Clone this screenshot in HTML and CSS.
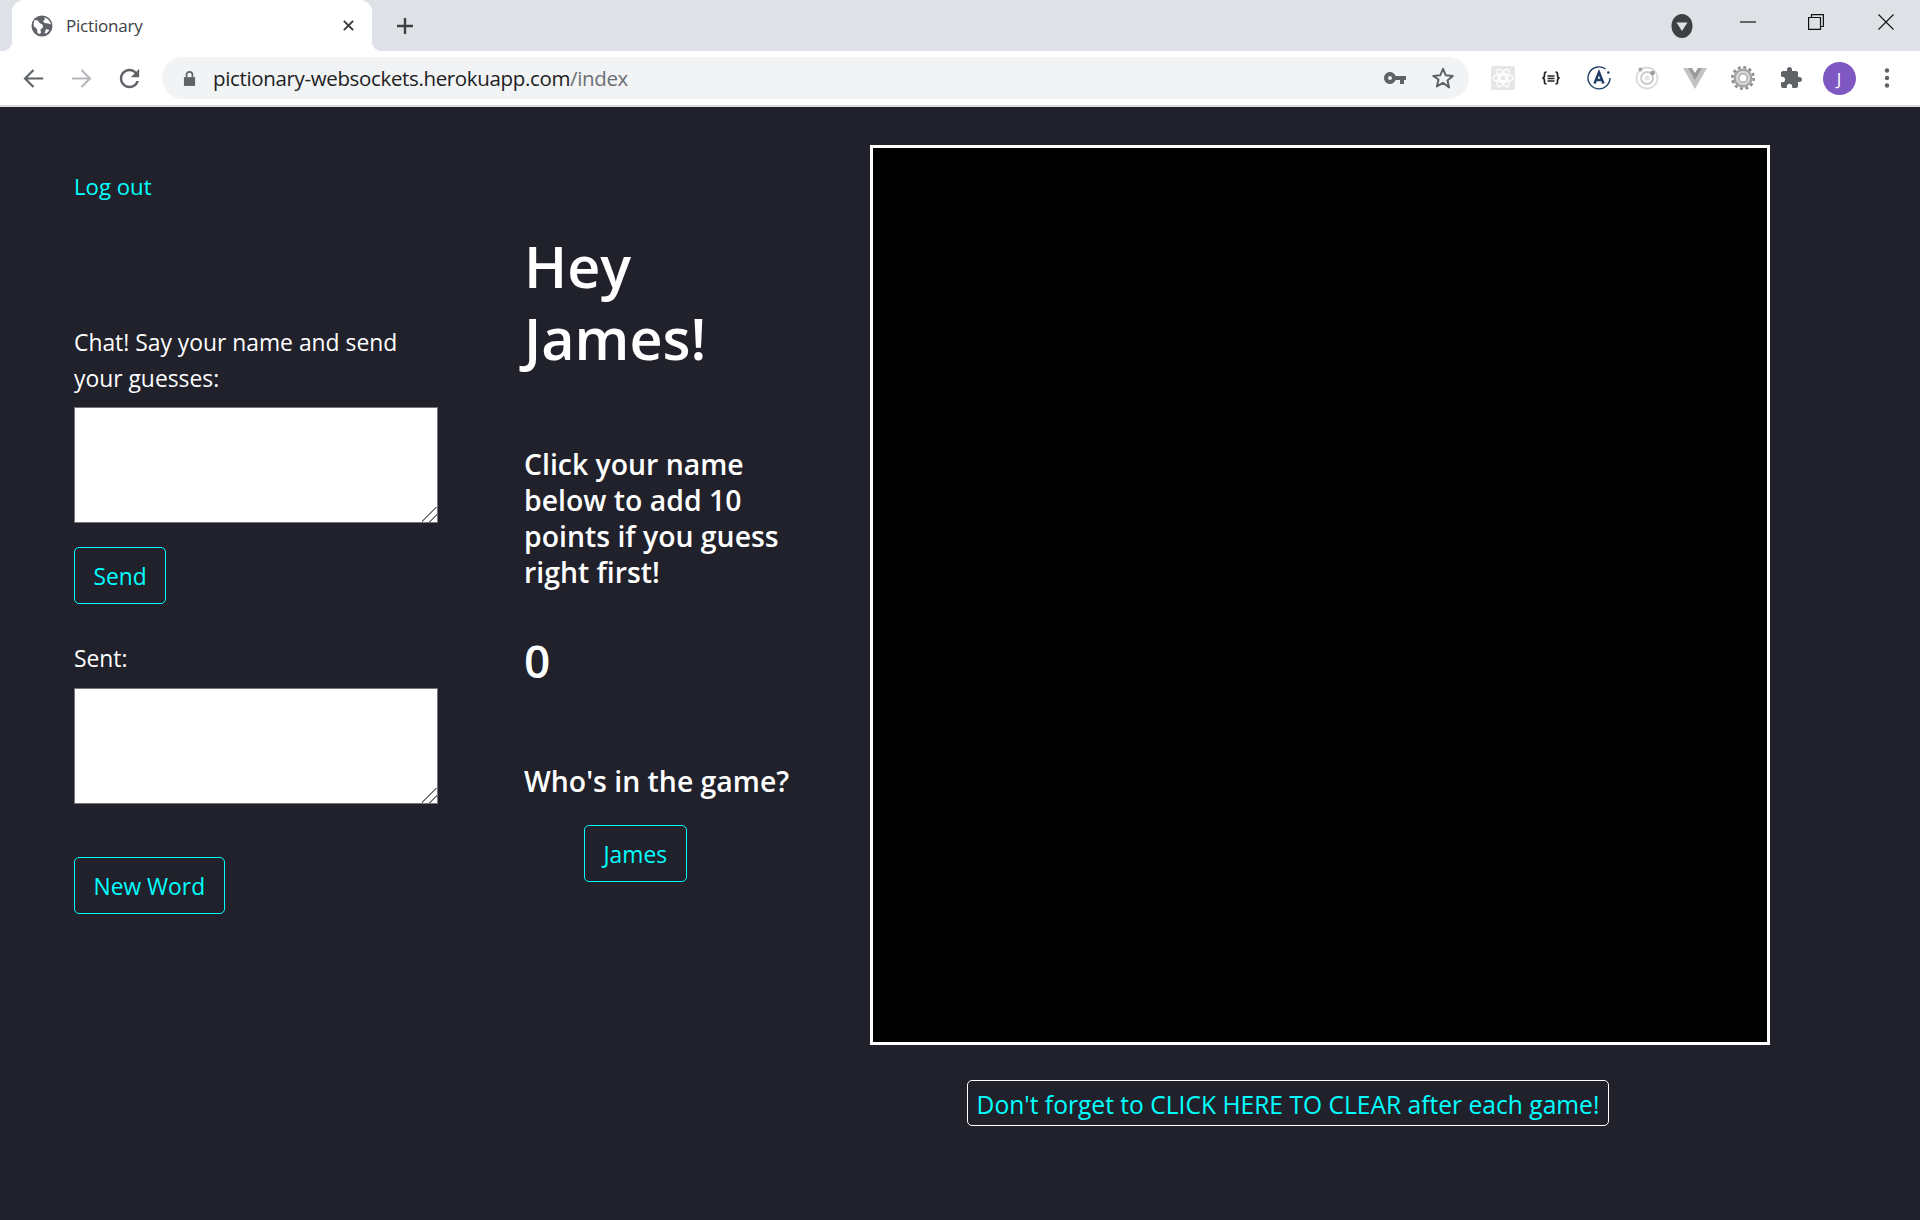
FILE: index.html
```html
<!DOCTYPE html>
<html lang="en">
<head>
<meta charset="utf-8">
<title>Pictionary</title>
<link rel="stylesheet" href="styles.css">
</head>
<body>
<header class="chrome">
  <div class="tabstrip">
    <div class="tab">
      <svg class="favicon" viewBox="0 0 22 22"><circle cx="11" cy="11" r="10.5" fill="#5f6368"/><path d="M3.500 5l3.500.500 1.500 2.500 3 1.500.5 3-2.500 2 .5 3.500-1.500 1-2-1-.5-4-3-2.500-.5-2.500zM13 2.500l1 2-2 1.500 1.500 2 4 .5 2.500 1c-.5-3-3-6-7-7zM15 14l3.500 1-2.500 3-2.500.500z" fill="#fff"/></svg>
      <span class="tab-title">Pictionary</span>
      <svg class="tab-close" viewBox="0 0 14 14"><path d="M2 2l10 10M12 2L2 12" stroke="#3c4043" stroke-width="2.200" fill="none"/></svg>
    </div>
    <svg class="new-tab" viewBox="0 0 18 18"><path d="M9 1v16M1 9h16" stroke="#3c4043" stroke-width="2.400" fill="none"/></svg>
    <div class="strip-right">
      <svg class="media" viewBox="0 0 22 24"><ellipse cx="11" cy="12" rx="10.500" ry="12" fill="#3c4043"/><path d="M5.500 8.500h11L11 17z" fill="#dee1e6"/></svg>
      <svg class="win win-min" viewBox="0 0 16 16"><path d="M0 8h16" stroke="#111" stroke-width="1.200"/></svg>
      <svg class="win win-max" viewBox="0 0 16 16"><path d="M.6 3.500h11.900v11.900H.6zM3.500 3.500V.6h11.900v11.900h-2.900" stroke="#111" stroke-width="1.200" fill="none"/></svg>
      <svg class="win win-close" viewBox="0 0 16 16"><path d="M.5.500l15 15M15.500.500l-15 15" stroke="#111" stroke-width="1.100" fill="none"/></svg>
    </div>
  </div>
  <div class="toolbar">
    <div class="tool nav"><svg viewBox="0 0 24 24"><path d="M20 12H5M12 5l-7 7 7 7" stroke="#5f6368" stroke-width="1.800" fill="none"/></svg></div>
    <div class="tool nav"><svg viewBox="0 0 24 24"><path d="M4 12h15M12 5l7 7-7 7" stroke="#b4b7bb" stroke-width="1.800" fill="none"/></svg></div>
    <div class="tool nav"><svg viewBox="0 0 24 24"><path d="M17.650 6.350C16.200 4.900 14.210 4 12 4c-4.420 0-7.990 3.580-7.990 8s3.570 8 7.990 8c3.730 0 6.840-2.550 7.730-6h-2.080c-.820 2.330-3.040 4-5.650 4-3.310 0-6-2.690-6-6s2.690-6 6-6c1.660 0 3.140.690 4.220 1.780L13 11h7V4l-2.350 2.350z" fill="#5f6368"/></svg></div>
    <div class="omnibox">
      <svg class="lock" viewBox="0 0 14 18"><path d="M1 7.500h12V17H1z" fill="#5f6368"/><path d="M3.800 8V5a3.200 3.200 0 0 1 6.400 0v3" stroke="#5f6368" stroke-width="1.800" fill="none"/></svg>
      <span class="url">pictionary-websockets.herokuapp.com<span class="url-path">/index</span></span>
      <svg class="omni-key" viewBox="1 6 22 12"><path d="M12.650 10C11.830 7.670 9.610 6 7 6c-3.310 0-6 2.690-6 6s2.690 6 6 6c2.610 0 4.830-1.670 5.650-4H17v4h4v-4h2v-4H12.650zM7 14c-1.100 0-2-.900-2-2s.900-2 2-2 2 .900 2 2-.900 2-2 2z" fill="#5f6368"/></svg>
      <svg class="omni-star" viewBox="0 0 24 24"><path d="M12 2.800l2.800 6.500 7 .6-5.300 4.600 1.600 6.900L12 16.800l-6.100 3.600 1.600-6.900L2.200 9.900l7-.6z" stroke="#5f6368" stroke-width="2" fill="none" stroke-linejoin="round"/></svg>
    </div>
    <div class="ext-row">
      <div class="tool"><svg viewBox="0 0 24 24"><rect width="24" height="24" rx="1.500" fill="#e6e6e6"/><g fill="none" stroke="#fff" stroke-width="1.300"><circle cx="12" cy="12" r="3"/><ellipse cx="12" cy="12" rx="10" ry="4"/><ellipse cx="12" cy="12" rx="10" ry="4" transform="rotate(60 12 12)"/><ellipse cx="12" cy="12" rx="10" ry="4" transform="rotate(120 12 12)"/></g></svg></div>
      <div class="tool"><svg viewBox="0 0 24 24"><path d="M7.500 6c-2.500 0-2 1.700-2 3.200 0 1.600-.6 2.800-2.200 2.800 1.600 0 2.200 1.200 2.200 2.800 0 1.500-.5 3.200 2 3.200M16.500 6c2.500 0 2 1.700 2 3.200 0 1.600.6 2.800 2.200 2.800-1.600 0-2.200 1.200-2.200 2.800 0 1.500.5 3.200-2 3.200" stroke="#202124" stroke-width="1.700" fill="none"/><path d="M8.500 10h7M8.500 12.500h7M8.500 15h7" stroke="#202124" stroke-width="1.400"/></svg></div>
      <div class="tool"><svg viewBox="0 0 24 24"><path d="M18.500 3A11 11 0 1 0 23 12" stroke="#1d3e66" stroke-width="1.400" fill="none"/><circle cx="21.300" cy="6.500" r="1.200" fill="#1d3e66"/><path d="M7.500 17.500L12 6.300l4.500 11.200M9.200 14h5.600" stroke="#1d3e66" stroke-width="2.400" fill="none"/></svg></div>
      <div class="tool"><svg viewBox="0 0 24 24"><circle cx="12" cy="12" r="10.500" stroke="#dcdcdc" stroke-width="1.800" fill="none"/><circle cx="12" cy="12" r="6" stroke="#c9c9c9" stroke-width="1.800" fill="none"/><circle cx="12" cy="12" r="2.500" fill="#e3e3e3"/><circle cx="5.500" cy="3.500" r="2" fill="#a5a5a5"/><circle cx="17.500" cy="7" r="2.200" fill="#999"/></svg></div>
      <div class="tool"><svg viewBox="0 0 24 24"><path d="M0 2h7l5 8 5-8h7L12 23z" fill="#c3c3c3"/><path d="M5 2h4l3 5 3-5h4l-7 12z" fill="#9b9b9b"/></svg></div>
      <div class="tool"><svg viewBox="0 0 24 24"><circle cx="12" cy="12" r="9.500" fill="#a3a3a3"/><circle cx="12" cy="12" r="10.700" fill="none" stroke="#8d8d8d" stroke-width="2.600" stroke-dasharray="3 2.600"/><circle cx="12" cy="12" r="6" fill="none" stroke="#d6d6d6" stroke-width="2.500"/><circle cx="12" cy="12" r="3.500" fill="#fff"/></svg></div>
      <div class="tool"><svg viewBox="0 0 24 24"><path d="M20.500 11H19V7c0-1.100-.900-2-2-2h-4V3.500C13 2.120 11.880 1 10.500 1S8 2.120 8 3.500V5H4c-1.100 0-1.990.900-1.990 2v3.800H3.500c1.490 0 2.700 1.210 2.700 2.700s-1.210 2.700-2.700 2.700H2V20c0 1.100.900 2 2 2h3.800v-1.500c0-1.490 1.210-2.700 2.700-2.700 1.490 0 2.700 1.210 2.700 2.700V22H17c1.100 0 2-.900 2-2v-4h1.500c1.380 0 2.500-1.120 2.500-2.500S21.880 11 20.500 11z" fill="#5f6368"/></svg></div>
      <div class="tool"><span class="avatar">J</span></div>
      <div class="tool"><svg viewBox="0 0 24 24"><circle cx="12" cy="4.500" r="2.200" fill="#5f6368"/><circle cx="12" cy="12" r="2.200" fill="#5f6368"/><circle cx="12" cy="19.500" r="2.200" fill="#5f6368"/></svg></div>
    </div>
  </div>
</header>
<main class="page">
  <section class="col-chat">
    <a class="logout" href="#">Log out</a>
    <p class="chat-label">Chat! Say your name and send your guesses:</p>
    <textarea class="chat-box"></textarea>
    <button class="btn send-btn">Send</button>
    <p class="sent-label">Sent:</p>
    <textarea class="chat-box"></textarea>
    <button class="btn word-btn">New Word</button>
  </section>
  <section class="col-score">
    <h1 class="greeting">Hey<br>James!</h1>
    <h3 class="hint">Click your name<br>below to add 10<br>points if you guess<br>right first!</h3>
    <div class="score">0</div>
    <h3 class="players-title">Who's in the game?</h3>
    <button class="btn player-btn">James</button>
  </section>
  <section class="col-canvas">
    <canvas class="board" width="894" height="894"></canvas>
    <button class="clear-btn">Don't forget to CLICK HERE TO CLEAR after each game!</button>
  </section>
</main>
</body>
</html>
```

FILE: styles.css
```css
* { box-sizing: border-box; }
html, body { margin: 0; height: 100%; }
body {
  display: flex;
  flex-direction: column;
  height: 1220px;
  overflow: hidden;
  background: #20212b;
  font-family: "Open Sans", "Noto Sans", sans-serif;
}

/* browser frame */
.chrome { flex: none; }
.tabstrip {
  height: 51px;
  background: #dee1e6;
  display: flex;
  align-items: center;
  padding-left: 12px;
}
.tab {
  position: relative;
  width: 360px;
  height: 51px;
  background: #fff;
  border-radius: 12px 12px 0 0;
  display: flex;
  align-items: center;
  padding: 0 17px 0 19px;
  align-self: flex-end;
}
.tab::before, .tab::after {
  content: "";
  position: absolute;
  bottom: 0;
  width: 10px;
  height: 10px;
}
.tab::before { left: -10px; background: radial-gradient(circle at 0 0, transparent 10px, #fff 10.500px); }
.tab::after { right: -10px; background: radial-gradient(circle at 100% 0, transparent 10px, #fff 10.500px); }
.favicon { width: 22px; height: 22px; flex: none; }
.tab-title {
  margin-left: 13px;
  flex: 1;
  font-size: 17px;
  color: #3c4043;
  letter-spacing: -0.2px;
}
.tab-close { width: 13px; height: 13px; flex: none; }
.new-tab { width: 18px; height: 18px; margin-left: 24px; flex: none; }
.strip-right {
  margin-left: auto;
  display: flex;
  align-items: center;
  padding-right: 26px;
}
.media { width: 22px; height: 24px; margin-right: 47px; }
.win { width: 16px; height: 16px; margin-top: -8px; }
.win-min { margin-right: 52px; }
.win-max { margin-right: 54px; }

.toolbar {
  height: 56px;
  background: #fff;
  border-bottom: 2px solid #dadce0;
  display: flex;
  align-items: center;
  padding: 0 9px;
}
.tool {
  width: 48px;
  height: 48px;
  flex: none;
  display: flex;
  align-items: center;
  justify-content: center;
}
.tool svg { width: 24px; height: 24px; }
.tool.nav svg { width: 29px; height: 29px; }
.omnibox {
  width: 1307px;
  height: 42px;
  margin-left: 9px;
  border-radius: 21px;
  background: #f1f3f4;
  display: flex;
  align-items: center;
  padding: 0 14px 0 21px;
}
.lock { width: 13px; height: 17px; flex: none; }
.url {
  margin-left: 17px;
  flex: 1;
  font-size: 20.500px;
  letter-spacing: -0.35px;
  color: #202124;
}
.url-path { color: #6b6f74; }
.omni-key { width: 22px; height: 12px; flex: none; }
.omni-star { width: 24px; height: 24px; margin-left: 25px; flex: none; }
.ext-row { display: flex; margin-left: 10px; }
.avatar {
  width: 33px;
  height: 33px;
  border-radius: 50%;
  background: #7e57c2;
  color: #fff;
  font-size: 17px;
  display: flex;
  align-items: center;
  justify-content: center;
}

/* page */
.page {
  flex: 1;
  display: grid;
  grid-template-columns: 450px 346px 900px;
  padding: 38px 0 0 74px;
  color: #fff;
}
.col-chat { padding-top: 24px; font-size: 22.850px; line-height: 36px; }
.logout { display: block; color: #0ff; text-decoration: none; font-size: 22.200px; }
.chat-label { margin: 120px 0 10px; width: 364px; }
.sent-label { margin: 37px 0 11px; }
.chat-box {
  display: block;
  width: 364px;
  height: 116px;
  background: #fff;
  border: 1px solid #767676;
  border-radius: 0;
  margin: 0;
}
.chat-box::-webkit-resizer {
  background: linear-gradient(135deg, transparent 0 46%, #777 46% 52%, transparent 52% 72%, #777 72% 78%, transparent 78%);
}
.btn {
  display: block;
  height: 57px;
  padding: 2px 18.500px 0;
  background: transparent;
  border: 1px solid #0ff;
  border-radius: 5px;
  color: #0ff;
  font: inherit;
  font-size: 22.800px;
}
.send-btn { margin-top: 24px; }
.word-btn { margin-top: 53px; }

.greeting {
  margin: 85px 0 0;
  font-size: 57.500px;
  line-height: 72px;
  font-weight: 600;
}
.hint {
  margin: 72px 0 0;
  font-size: 28.400px;
  line-height: 36px;
  font-weight: 600;
}
.score {
  margin-top: 42px;
  font-size: 46px;
  line-height: 56px;
  font-weight: 600;
}
.players-title {
  margin: 75px 0 0;
  font-size: 28.400px;
  line-height: 36px;
  font-weight: 600;
}
.player-btn { margin: 26px 0 0 60px; }

.board {
  display: block;
  width: 900px;
  height: 900px;
  background: #000;
  border: 3px solid #fff;
}
.clear-btn {
  display: block;
  margin: 35px 0 0 97px;
  width: 642px;
  height: 46px;
  padding: 2px 0 0;
  background: #20212b;
  border: 1px solid #fff;
  border-radius: 5px;
  color: #0ff;
  font: inherit;
  font-size: 24.600px;
  white-space: nowrap;
}
```
